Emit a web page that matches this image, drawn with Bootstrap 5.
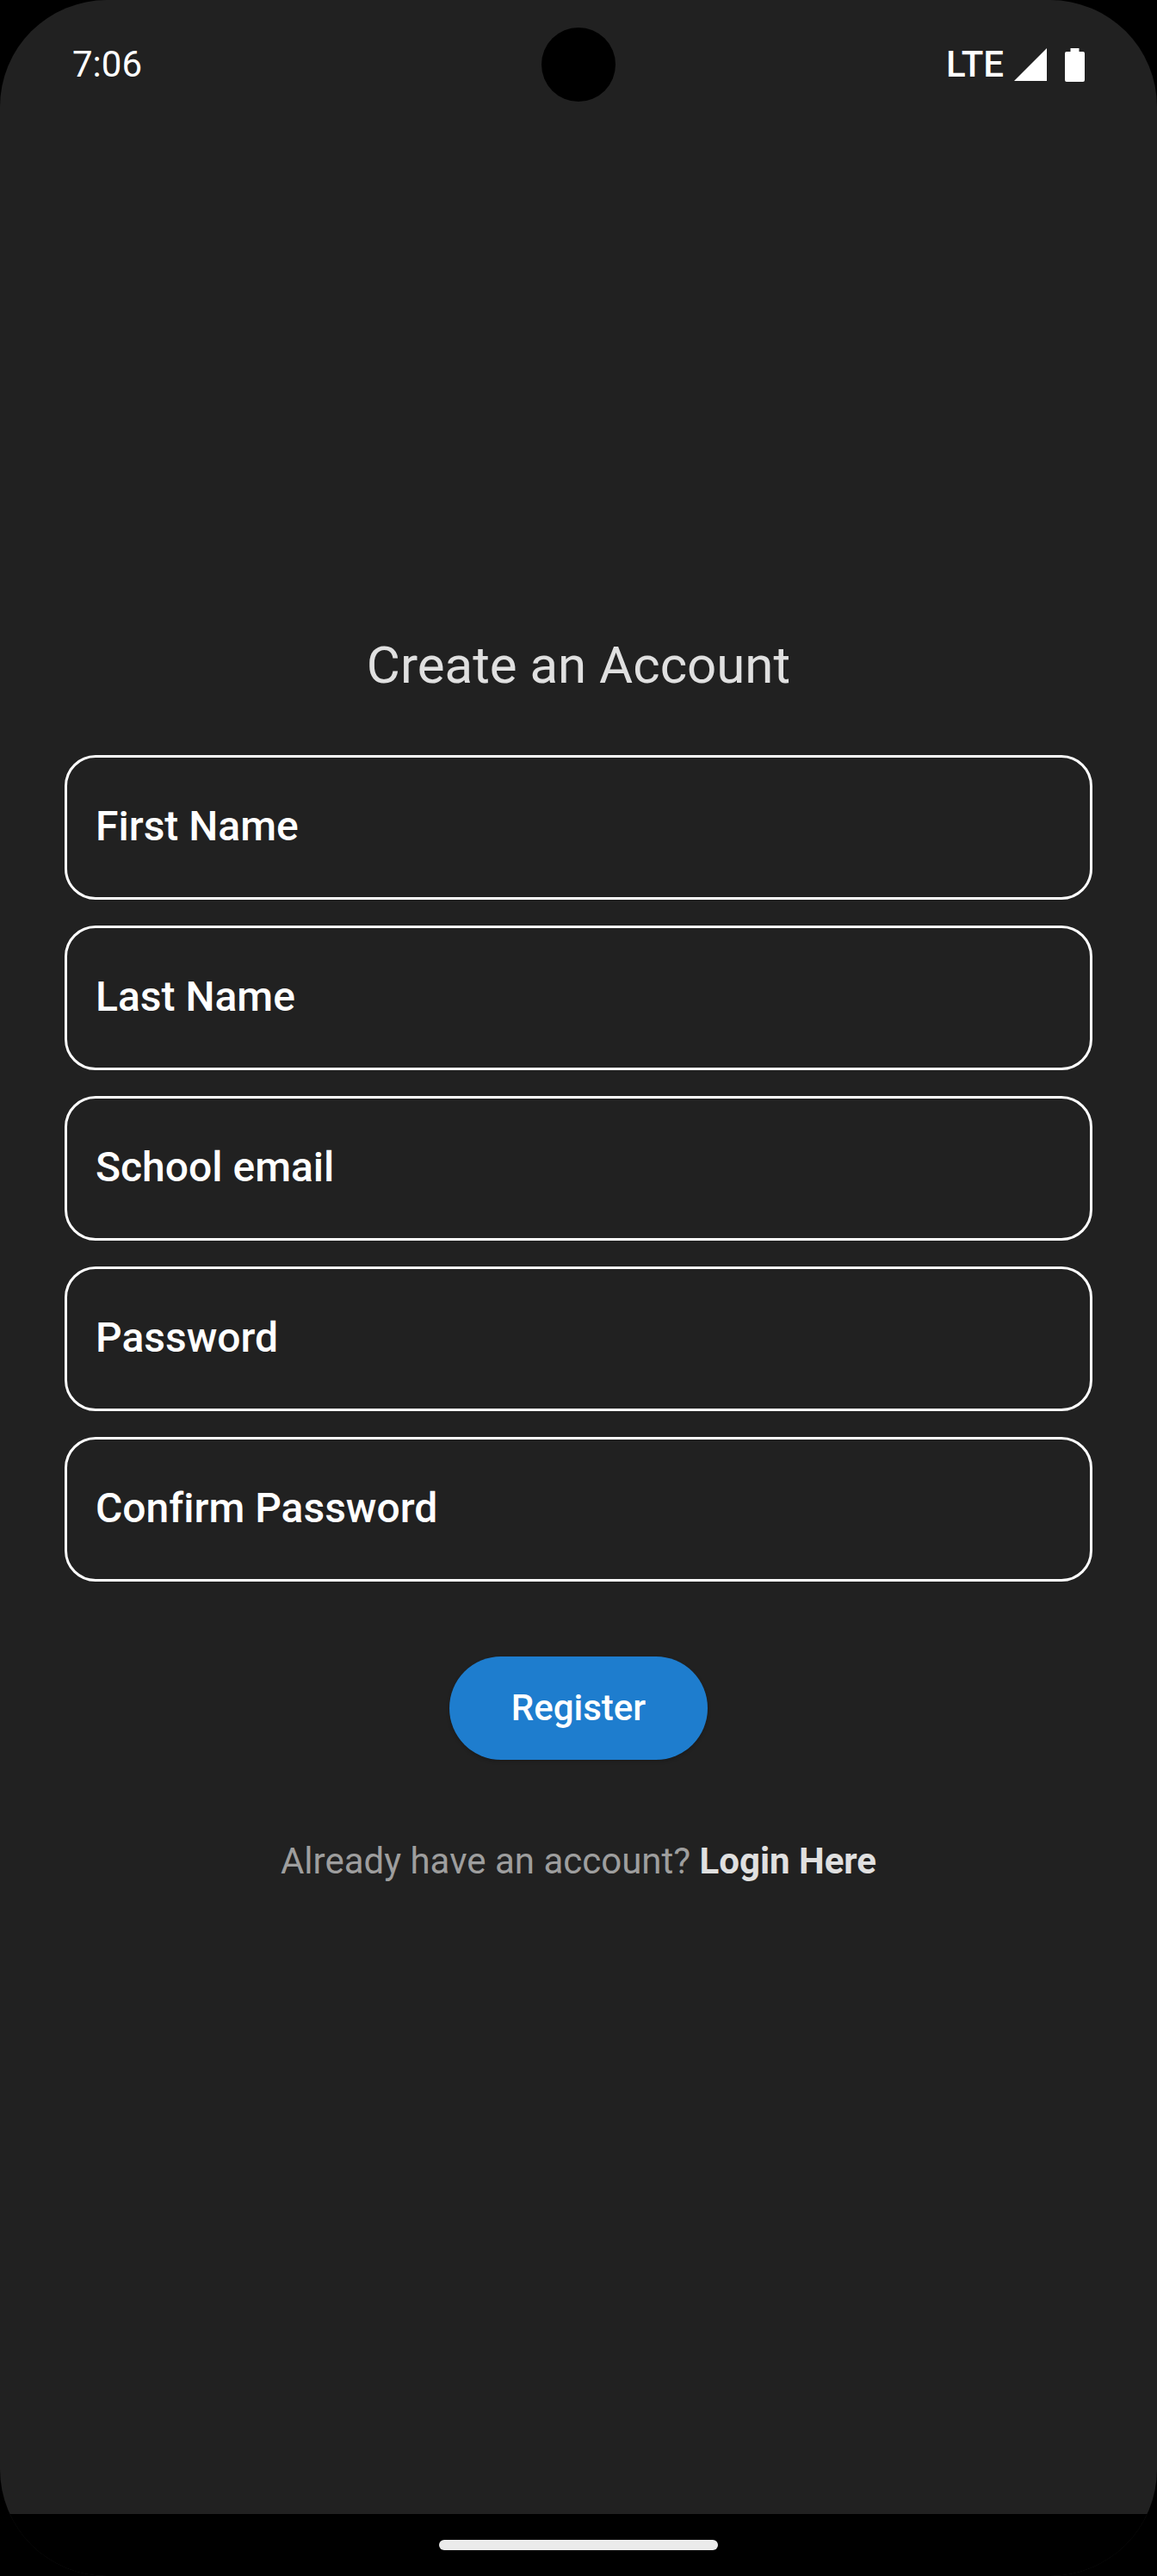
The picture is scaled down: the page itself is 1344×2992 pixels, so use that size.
<!DOCTYPE html>
<html lang="en">
<head>
<meta charset="utf-8">
<meta name="viewport" content="width=device-width, initial-scale=1">
<title>Create an Account</title>
<link href="https://cdn.jsdelivr.net/npm/bootstrap@5.3.0/dist/css/bootstrap.min.css" rel="stylesheet">
<style>
  body { background: #000; font-family: Roboto, "Noto Sans", sans-serif; font-size: 42px; line-height: 50px; font-variant-ligatures: no-common-ligatures; }
  .phone { background: #212121; border-radius: 124px; }
  .status-bar { height: 150px; padding: 0 84px; }
  .camera { width: 86px; height: 86px; background: #000; }
  .network-type { font-weight: 500; }
  .signal-icon { margin-left: 12px; }
  .battery-icon { margin-left: 21px; }
  .page { padding: 0 75px 146px; }
  .page-title { font-size: 60px; line-height: 72px; font-weight: 400; color: #e0e0e0; margin-bottom: 68px; }
  .fields { gap: 30px; margin-bottom: 87px; }
  .form-floating > .field-box, .form-floating > .field-box:focus {
    height: 168px; padding: 44px 33px 0; color: #fff; font-size: 48px; line-height: 60px;
    background: transparent; border: 3px solid #fff; border-radius: 36px;
  }
  .form-floating > .field-label {
    display: flex; align-items: center; padding: 0 33px 3px; border-width: 3px;
    color: #fff; font-size: 48px; line-height: 60px; font-weight: 500;
  }
  .register-btn {
    --bs-btn-bg: #1e7dce; --bs-btn-color: #fff; --bs-btn-hover-bg: #1a6fb8; --bs-btn-hover-color: #fff;
    font-size: 42px; line-height: 50px; font-weight: 500; height: 120px; padding: 0 72px; border: 0;
    box-shadow: 0 2px 4px rgba(0, 0, 0, .2); margin-bottom: 93px;
  }
  .login-line { color: #9e9e9e; }
  .login-line a { color: #e0e0e0; }
  .nav-strip { height: 72px; background: #000; }
  .home-handle { width: 324px; height: 12px; background: #ebebeb; }
</style>
</head>
<body>
<div class="phone min-vh-100 d-flex flex-column overflow-hidden">
  <header class="status-bar d-flex align-items-center position-relative text-white">
    <span>7:06</span>
    <div class="camera rounded-circle position-absolute top-50 start-50 translate-middle"></div>
    <span class="network-type ms-auto">LTE</span>
    <svg class="signal-icon" width="38" height="38" viewBox="0 0 38 38" aria-hidden="true"><path d="M38 0V38H0Z" fill="#fff"/></svg>
    <svg class="battery-icon" width="23" height="39" viewBox="0 0 23 39" aria-hidden="true"><path d="M6.500 0H16.500V4H21Q23 4 23 6V37Q23 39 21 39H2Q0 39 0 37V6Q0 4 2 4H6.500Z" fill="#fff"/></svg>
  </header>

  <main class="page flex-grow-1 d-flex flex-column justify-content-center">
    <h1 class="page-title text-center">Create an Account</h1>
    <form class="d-flex flex-column">
      <div class="fields d-flex flex-column">
        <div class="form-floating">
          <input type="text" class="form-control field-box" id="firstName" placeholder=" ">
          <label class="field-label" for="firstName">First Name</label>
        </div>
        <div class="form-floating">
          <input type="text" class="form-control field-box" id="lastName" placeholder=" ">
          <label class="field-label" for="lastName">Last Name</label>
        </div>
        <div class="form-floating">
          <input type="email" class="form-control field-box" id="email" placeholder=" ">
          <label class="field-label" for="email">School email</label>
        </div>
        <div class="form-floating">
          <input type="password" class="form-control field-box" id="password" placeholder=" ">
          <label class="field-label" for="password">Password</label>
        </div>
        <div class="form-floating">
          <input type="password" class="form-control field-box" id="confirmPassword" placeholder=" ">
          <label class="field-label" for="confirmPassword">Confirm Password</label>
        </div>
      </div>
      <button type="submit" class="btn register-btn rounded-pill align-self-center">Register</button>
    </form>
    <p class="login-line text-center mb-0">Already have an account? <a href="#" class="fw-bold text-decoration-none">Login Here</a></p>
  </main>

  <footer class="nav-strip d-flex align-items-center justify-content-center">
    <div class="home-handle rounded-pill"></div>
  </footer>
</div>
<script src="https://cdn.jsdelivr.net/npm/bootstrap@5.3.0/dist/js/bootstrap.bundle.min.js"></script>
</body>
</html>
